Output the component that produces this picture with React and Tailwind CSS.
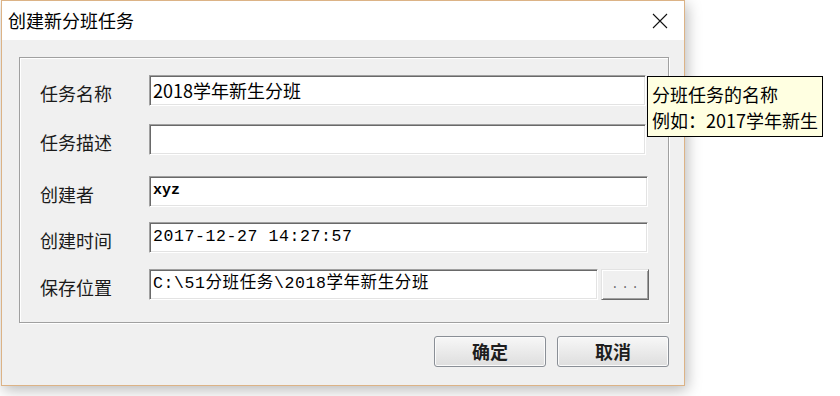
import React from "react";

const cjk = { fontFamily: '"Noto Sans CJK SC", "Noto Sans", sans-serif' };
const mono = { fontFamily: '"Liberation Mono", "Noto Sans CJK SC", monospace' };

function Field({ width, children, textStyle, textClass = "" }) {
  return (
    <div
      className={`h-[31px] bg-white border border-t-[#a0a0a0] border-l-[#a0a0a0] border-b-white border-r-white shadow-[inset_1px_1px_0_#696969,inset_-1px_-1px_0_#e3e3e3] flex items-center pl-[3px] overflow-hidden whitespace-nowrap text-black ${textClass}`}
      style={{ width, ...textStyle }}
    >
      {children}
    </div>
  );
}

function Row({ label, mt, children }) {
  return (
    <div className="flex items-center" style={{ marginTop: mt }}>
      <div className="w-[129px] pl-[20px] pt-[4px] text-[18px] leading-[20px] text-[#1a1a1a]" style={cjk}>
        {label}
      </div>
      {children}
    </div>
  );
}

export default function App() {
  return (
    <div className="relative w-[840px] h-[396px] bg-white overflow-hidden">
      <div className="ml-px w-[684px] h-[386px] border border-[#dcb386] bg-[#f0f0f0] flex flex-col shadow-[2px_4px_14px_rgba(0,0,0,0.28)]">
        <div className="h-[39px] bg-white flex items-center justify-between pl-[6px] pr-[16px]">
          <span className="text-[18px] text-black" style={cjk}>创建新分班任务</span>
          <svg width="16" height="16" viewBox="0 0 16 16" className="mt-[1px]">
            <path d="M1 1 L15 15 M15 1 L1 15" stroke="#111" strokeWidth="1.1" fill="none" />
          </svg>
        </div>
        <div className="flex-1 flex flex-col pt-[17px] pl-[17px] pr-[15px]">
          <div className="h-[266px] border border-[#a0a0a0] shadow-[inset_1px_1px_0_#ffffff,1px_1px_0_#ffffff] flex flex-col pt-[17px]">
            <Row label="任务名称" mt={0}>
              <Field width={497} textStyle={cjk} textClass="text-[18px]">2018学年新生分班</Field>
            </Row>
            <Row label="任务描述" mt={18}>
              <Field width={497} textStyle={cjk}></Field>
            </Row>
            <Row label="创建者" mt={21}>
              <Field width={499} textStyle={mono} textClass="text-[15px] font-bold">xyz</Field>
            </Row>
            <Row label="创建时间" mt={15}>
              <Field width={499} textStyle={{ ...mono, letterSpacing: "0.6px" }} textClass="text-[16.5px]">2017-12-27 14:27:57</Field>
            </Row>
            <Row label="保存位置" mt={16}>
              <Field width={449} textStyle={{ ...mono, letterSpacing: "0.6px" }} textClass="text-[16.5px]">C:\51分班任务\2018学年新生分班</Field>
              <div className="ml-[3px] w-[48px] h-[31px] bg-[#f0f0f0] border border-t-[#e3e3e3] border-l-[#e3e3e3] border-b-[#696969] border-r-[#696969] shadow-[inset_1px_1px_0_#ffffff,inset_-1px_-1px_0_#a0a0a0] flex items-center justify-center">
                <span className="text-[12px] tracking-[3px] text-[#6a6a6a] pl-[3px]" style={mono}>...</span>
              </div>
            </Row>
          </div>
          <div className="flex justify-end gap-[11px] mt-[13px] pr-[0px]">
            {["确定", "取消"].map((t) => (
              <div
                key={t}
                className="w-[112px] h-[31px] rounded-[3px] border border-[#8a8f96] bg-gradient-to-b from-[#f7f7f7] to-[#dedede] shadow-[inset_0_0_0_1px_#fbfbfb] flex items-center justify-center text-[18px] font-bold text-[#1e1e1e]"
                style={cjk}
              >
                {t}
              </div>
            ))}
          </div>
        </div>
      </div>
      <div
        className="absolute left-[647px] top-[76px] w-[176px] h-[61px] bg-[#ffffe1] border border-black flex flex-col justify-center pl-[4px] text-[18px] leading-[26px] text-black whitespace-nowrap"
        style={cjk}
      >
        <div>分班任务的名称</div>
        <div>例如：2017学年新生</div>
      </div>
    </div>
  );
}
